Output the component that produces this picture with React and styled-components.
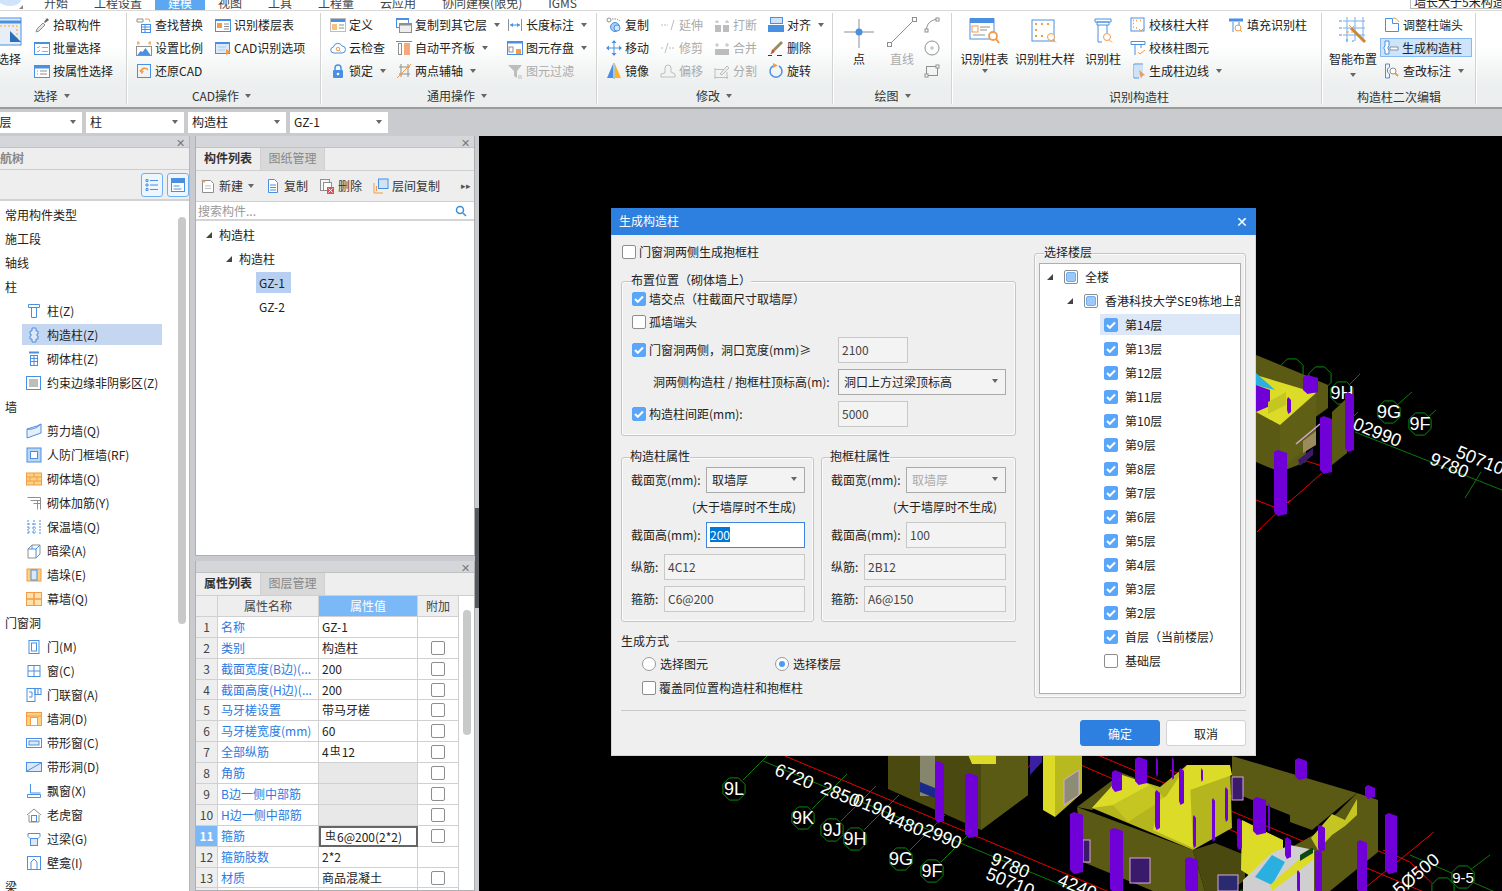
import React from 'react'
import styled, { createGlobalStyle } from 'styled-components'

const GlobalStyle = createGlobalStyle`
  html, body { margin: 0; padding: 0; background: #c9cbcf; overflow: hidden; }
  body, #root { font: 12px/16px "Noto Sans CJK SC", "Microsoft YaHei", "Liberation Sans", sans-serif; color: #222; }
  * { box-sizing: border-box; }
`

const B = '#4a90e2'
const L = '#a9cdf5'
const O = '#f29b4b'
const G = '#8f8f8f'
const D = '#bdbdbd'

// ribbon + tree icons, all on a 16 unit grid
const ic = {
  pick: <><path d="M2 15l1-3 6-6 2 2-6 6z" fill="#e4e4e4" stroke={G} /><path d="M10 5l3-4 2 2-4 3z" fill="#666" /></>,
  batch: <><rect x=".5" y="2.5" width="15" height="12" fill="#fff" stroke={B} /><path d="M.5 3h15" stroke={B} strokeWidth="2" /><path d="M3 7l1 1 2-2M3 11l1 1 2-2" stroke={O} /><path d="M8 7.5h6M8 11.5h6" stroke={O} /></>,
  attr: <><rect x=".5" y="2.5" width="15" height="12" fill="#fff" stroke={B} /><rect x="0" y="2" width="16" height="3.5" fill={B} /><path d="M3 8h1M6 8h7M3 11h1M6 11h7" stroke={G} /></>,
  find: <><path d="M1 2h6v3H1z" fill="#fff" stroke={G} /><path d="M9 2h4l1 3" stroke={O} /><rect x="5.5" y="7.5" width="9" height="8" fill="#fff" stroke={B} /><path d="M6 10h8M6 12.5h8M9 8v7" stroke={B} /></>,
  scale: <><path d="M1 3h3M12 3h3M2 1v4M14 1v4" stroke={O} /><rect x=".5" y="6.5" width="15" height="9" fill="#fff" stroke={G} /><path d="M1.5 15l3-4 2 1 3-4 5 7z" fill={B} /></>,
  restore: <><rect x="1.5" y="1.5" width="13" height="13" stroke={B} /><path d="M5 9c0-4 5-5 7-2" stroke={O} strokeWidth="1.6" /><path d="M3 7l3 4 2-3z" fill={O} /></>,
  floors: <><rect x=".5" y="2.5" width="15" height="12" fill="#fff" stroke={B} /><path d="M.5 3h15" stroke={B} strokeWidth="2" /><rect x="2" y="6" width="5" height="5" fill={O} /><path d="M9 7h5M9 9.5h5M9 12h5" stroke={G} /></>,
  cad: <><rect x=".5" y="2.5" width="14" height="11" fill="#dbe9f8" stroke={B} /><path d="M.5 3h14" stroke={B} strokeWidth="2" /><path d="M3 7h8M3 10h7" stroke={L} /><path d="M11 9l5 3-5 3z" fill={O} /></>,
  define: <><rect x=".5" y="1.5" width="15" height="13" fill="#fff" stroke={D} /><rect x="1" y="2" width="14" height="3" fill={B} /><rect x="2" y="7" width="5" height="6" fill="#f6c27d" /><path d="M9 8h5M9 11h5" stroke={G} /></>,
  cloud: <><path d="M4 13a3 3 0 0 1-.5-6 4.500 4.500 0 0 1 8.500-1 3.500 3.500 0 0 1 0 7z" fill="#fff" stroke={B} /><circle cx="8" cy="9" r="1.800" stroke={O} /><path d="M9.300 10.300l1.500 1.500" stroke={O} /></>,
  lock: <><path d="M5 7V5a3 3 0 0 1 6 0v2" stroke={B} strokeWidth="1.500" /><rect x="3" y="7" width="10" height="8" rx="1" fill={B} /><circle cx="8" cy="11" r="1.300" fill="#fff" /></>,
  copyfloor: <><rect x=".5" y="1.500" width="12" height="9" fill="#fff" stroke={B} /><path d="M0 2h13" stroke={B} strokeWidth="2" /><rect x="3.500" y="6.500" width="12" height="9" fill="#eee" stroke={G} /><path d="M3 7.500h13" stroke={G} strokeWidth="2" /></>,
  level: <><path d="M0 1.500h16" stroke={B} /><rect x="2.500" y="3.500" width="3" height="11" fill="#fff" stroke={G} /><rect x="8" y="3" width="6" height="12" fill="#f5a878" /></>,
  axis: <><path d="M3 4h11M3 11h11M5 1v13M12 1v13" stroke={G} /><path d="M1 15L15 1" stroke={O} /></>,
  dim: <><path d="M1.500 2v12M14.500 2v12" stroke={G} /><path d="M3 8h10" stroke={B} /><path d="M3 8l3-2v4zM13 8l-3-2v4z" fill={B} /></>,
  save: <><rect x=".5" y="1.500" width="15" height="13" fill="#fff" stroke={B} /><path d="M0 2.500h16" stroke={B} strokeWidth="2" /><rect x="2" y="7" width="4" height="5" stroke={G} /><rect x="9" y="9" width="5" height="5" fill={O} /></>,
  filter: <><path d="M1 2h14l-5 6v7l-3-2V8z" fill={D} /><path d="M11 13h4M11 15h4" stroke={D} /></>,
  copy: <><circle cx="3" cy="3" r="2" fill="#fff" stroke={G} /><path d="M6 2h5l3 2" stroke={G} strokeDasharray="1.500 1" /><circle cx="9" cy="10" r="4.500" fill={L} stroke={B} /><circle cx="11" cy="11" r="3" fill="#d6e7fa" stroke={B} /></>,
  move: <><path d="M8 2v12M2 8h12" stroke={B} /><path d="M8 0l2.500 3h-5zM8 16l2.500-3h-5zM0 8l3-2.500v5zM16 8l-3-2.500v5z" fill={B} /></>,
  mirror: <><path d="M7 1l-6 14h6z" fill={B} /><path d="M9 1l6 14H9z" fill="#f8b622" /><path d="M8 0v16" stroke={G} /></>,
  extend: <><path d="M1 8h7" stroke={D} strokeDasharray="2 1" /><path d="M11 13l3-10" stroke={D} /></>,
  trim: <><path d="M1 8h3M9 8h6" stroke={D} strokeDasharray="2 1" /><path d="M5 13l3-10" stroke={D} /></>,
  offset: <path d="M1 14v-3l4-1V5a3 3 0 0 1 6 0v4l4 2v3z" fill="#f3f3f3" stroke={D} />,
  brk: <><path d="M1 8h6v7H1zM9 8h6v7H9z" fill={D} /><path d="M3 3v3M13 3v3M5 5h-4M11 5h4" stroke={D} /></>,
  merge: <><path d="M1 9h14v6H1z" fill={D} /><path d="M3 3v4M13 3v4M1 5h4M11 5h4" stroke={D} /></>,
  split: <><path d="M1 6.500h11M1 14.500h13M1 5v11M13 9v7" stroke={D} /><path d="M6 11l7-8 2 2-7 7z" fill="#eee" stroke={D} /></>,
  align: <><rect x="2.500" y=".5" width="12" height="6" fill="#cfe2f8" stroke={B} /><rect x="0" y="8" width="16" height="7" fill={B} /></>,
  del: <><path d="M5 9L13 1l2 2-8 8z" fill="#9c8a60" /><path d="M2 14c2-1 1-4 3-5l2 2c-1 2-3 3-5 3z" fill="#c8532a" /><path d="M0 15.500h4M9 15.500h5" stroke="#333" /></>,
  rotate: <><path d="M5 3a6 6 0 1 0 6 0" stroke={B} strokeWidth="1.500" /><path d="M5 0l5 2.500-5 2.500z" fill={O} /></>,
  arc: <><path d="M2.500 13c0-6 4-10 11-11" stroke={G} /><rect x="1" y="12" width="3" height="3" fill="#fff" stroke={G} /><rect x="12" y="1" width="3" height="3" fill="#fff" stroke={G} /></>,
  circle: <><circle cx="8" cy="8" r="7" stroke={G} /><rect x="7" y="7" width="2" height="2" stroke={G} strokeWidth=".6" /></>,
  rect: <><rect x="2.500" y="3.500" width="11" height="9" stroke={G} /><rect x="1" y="11" width="3" height="3" fill="#fff" stroke={G} /><rect x="12" y="2" width="3" height="3" fill="#fff" stroke={G} /></>,
  checkDetail: <><rect x="1" y="1" width="13" height="13" stroke={B} /><path d="M3 3.500h1M6 3.500h1M10 3.500h1M3 6.500h1M3 10h1M6 11h1" stroke={O} strokeWidth="1.500" /><path d="M9 12l2 2 4-4" stroke={O} /></>,
  checkCol: <><path d="M1 1.500h14v3H1zM4 4.500h8" stroke={B} /><path d="M5 4.500V15M11 4.500V8" stroke={B} /><path d="M8 12l2 2 5-4" stroke={O} /></>,
  edge: <><path d="M4 1v14M4 1h9M4 15h5" stroke={B} /><rect x="4" y="2" width="9" height="12" fill="#cfe2f8" /><path d="M9 7l6 5-3 1-1 3z" fill={O} /></>,
  fill: <><path d="M1 1.500h14v3H1z" fill={B} /><path d="M5 5v10M11 5v3" stroke={B} /><circle cx="10" cy="11" r="3" fill="#fff" stroke={O} /><path d="M12 13l2 2" stroke={O} /></>,
  headAdj: <><path d="M1.500 1.500h7v5h6v8h-13z" stroke={B} fill="#fff" /><path d="M9 1c3 0 5 2 6 4" stroke={O} /></>,
  genCol: <><path d="M2 1h4v5l-1 1v2l1 1v4H2v-4l-1-1V7l1-1z" fill="#fff" stroke={B} /><path d="M7 7h8v3H7z" fill="#fff" stroke={G} /></>,
  mark: <><path d="M1.500 1v14M1.500 1h4v3l-2 2v3l2 2v4h-4" stroke={B} /><circle cx="9" cy="8" r="3" fill="#fff" stroke={G} /><path d="M11 10l3 3" stroke={O} strokeWidth="2" /></>,
  // tree icons
  col: <><path d="M2.500 1.500h11v3h-11zM5 4.500h6" stroke={B} /><path d="M5.500 4.500v10h5v-10" stroke={B} /></>,
  gz: <path d="M6 1h4v3h2v3h-1v2h1v3h-2v3H6v-3H4V9h1V7H4V4h2z" fill="#dce8f8" stroke={B} />,
  brick: <><path d="M3 1.500h10" stroke={B} strokeWidth="2" /><rect x="4.500" y="4.500" width="7" height="10" stroke={B} /><path d="M5 7.500h6M5 10.500h6M8 5v9" stroke={B} /></>,
  shade: <><rect x=".5" y="1.500" width="14" height="13" fill="#fff" stroke={B} /><rect x="3" y="4" width="9" height="8" fill="#bdbdbd" /></>,
  shear: <><path d="M1 6l10-3 4-2v9l-14 5z" fill="#e6eff9" stroke={B} /><path d="M1 6c5 1 10-1 14-5" stroke={B} /></>,
  frame: <><rect x="1" y="1" width="14" height="14" fill="#bcd6f3" stroke={B} /><rect x="4.500" y="4.500" width="7" height="7" fill="#fff" stroke={B} /></>,
  wallB: <><rect x=".5" y="2" width="15" height="12" fill="#fbd27e" stroke={O} /><path d="M1 6h14M1 10h14M8 2v4M4 6v4M11 6v4M8 10v4" stroke={O} /></>,
  rebar: <path d="M1.500 2.500h13M4.500 5.500h10M7.500 8.500h7M14.500 2.500v12M11.500 5.500v9" stroke={G} />,
  insul: <path d="M2 1v14M8 1v14M14 1v14M2 5h2M2 9h2M2 13h2M6 5h4M6 9h4M6 13h4" stroke={B} strokeDasharray="2 1" />,
  beam: <><path d="M2 6l4-4h8v9l-4 4H2z" fill="#fff" stroke={G} /><path d="M2 6h8v9M10 6l4-4M6 2v4" stroke={B} /></>,
  pier: <><rect x="1" y="2" width="14" height="12" fill="#fbd27e" stroke={O} /><rect x="5" y="3" width="6" height="10" fill="#dce8f8" stroke={B} /></>,
  curtain: <><rect x=".5" y="1.500" width="15" height="13" fill="#fde3aa" stroke={O} /><path d="M1 8h14M8 2v12" stroke={O} strokeWidth="1.500" /></>,
  door: <><rect x="3" y="1.500" width="10" height="13" fill="#fff" stroke={B} /><rect x="5.500" y="4" width="5" height="8" stroke={B} /></>,
  win: <><rect x="2" y="2.500" width="12" height="11" fill="#fff" stroke={B} /><path d="M8 3v10M2 8h12" stroke={B} /></>,
  doorwin: <><rect x="1" y="1.500" width="8" height="13" fill="#fff" stroke={B} /><rect x="9" y="1.500" width="6" height="6" stroke={B} /><path d="M12 2v5M3 5h3v5H3" stroke={B} /></>,
  hole: <><rect x=".5" y="1.500" width="15" height="13" fill="#fbd27e" stroke={O} /><path d="M1 5h14" stroke={O} /><rect x="4.500" y="6.500" width="7" height="8" fill="#fff" stroke={O} /></>,
  band: <><rect x=".5" y="3.500" width="15" height="9" fill="#fff" stroke={B} /><rect x="3" y="6" width="10" height="4" fill="#dce8f8" stroke={B} /></>,
  bandh: <><rect x=".5" y="3.500" width="15" height="9" fill="#dce8f8" stroke={B} /><path d="M1 12L15 4" stroke={B} /></>,
  bay: <path d="M4.500 1v9h10M1.500 14.500h13v-3h-13z" stroke={B} />,
  dormer: <><path d="M1 8l7-6 7 6" stroke={G} /><path d="M3 8v7h10V8" stroke={G} /><rect x="5.500" y="8.500" width="5" height="6" stroke={B} /></>,
  lintel: <><path d="M2 2.500h12v3l-2 2H4l-2-2z" fill="#fff" stroke={B} /><rect x="4.500" y="7.500" width="7" height="7" fill="#dce8f8" stroke={B} /></>,
  niche: <><rect x="1.500" y="1.500" width="13" height="13" fill="#fff" stroke={B} /><path d="M5 14V7l3-3 3 3v7" stroke={B} /></>,
  tableS: <><rect x="1" y="3" width="24" height="20" fill="#fff" stroke={B} /><rect x="1" y="2" width="24" height="5" fill={B} /><rect x="3" y="10" width="6" height="6" fill="#fff" stroke={O} /><path d="M11 11h10M11 14h7M4 19h12" stroke={G} /><circle cx="24" cy="20" r="4" fill="#fff" stroke={O} strokeWidth="1.800" /><path d="M27 23l3 4" stroke={O} strokeWidth="2" /></>,
  detailS: <><rect x="3" y="4" width="22" height="21" fill="#fff" stroke={B} /><path d="M6 8h2M12 8h2M18 8h2M6 14h2M6 20h2M12 20h2" stroke={O} strokeWidth="2" /><circle cx="22" cy="21" r="3.500" fill="#fff" stroke={O} /><path d="M24.500 24l2.500 2.500" stroke={O} /></>,
  colS: <><path d="M8 3h16v3H8zM10 6h12v3H10z" fill="#fff" stroke={B} /><path d="M11 9v17h4M20 9v8" stroke={B} /><circle cx="20" cy="21" r="3.500" fill="#fff" stroke={O} /><path d="M22.500 24l2.500 2.500" stroke={O} /></>,
  smart: <><path d="M6 5h22M6 12h22M6 19h22M10 1v24M18 1v24M26 1v24" stroke="#7ab0ea" /><path d="M2 5h3M2 12h3M2 19h3" stroke={B} /><path d="M14 12l14 14" stroke="#c8873a" strokeWidth="3" /><path d="M12 9l2 2M17 10l-2 2M9 16h3M15 17v-2" stroke={O} /><path d="M10 26v-3M16 26v-2" stroke={B} /></>,
  pointL: <><path d="M16 3v29M1 16h30" stroke={G} /><circle cx="16" cy="16" r="3.500" fill={B} /></>,
  lineL: <><path d="M4 28L28 4" stroke={G} /><rect x="1.500" y="26.500" width="4" height="4" fill="#fff" stroke={G} /><rect x="26.500" y="1.500" width="4" height="4" fill="#fff" stroke={G} /></>,
}

const Glyph = styled.svg`
  display: block;
  flex-shrink: 0;
`

const Icon = ({ n, s = 16, v = 16 }) => (
  <Glyph width={s} height={s} viewBox={`0 0 ${v} ${v}`} fill="none">{ic[n]}</Glyph>
)

const Page = styled.div`
  width: 1502px;
  height: 891px;
  overflow: hidden;
  display: flex;
  flex-direction: column;
`

const TabBar = styled.div`
  height: 11px;
  flex-shrink: 0;
  background: #fff;
  border-bottom: 1px solid #d9d9d9;
  display: flex;
  overflow: hidden;
`

const Logo = styled.div`
  width: 31px;
  flex-shrink: 0;
`

const Tab = styled.div`
  height: 10px;
  padding: 0 13px;
  line-height: 6px;
  white-space: nowrap;
  color: ${p => (p.$on ? '#fff' : '#444')};
  background: ${p => (p.$on ? '#5ba7f1' : 'transparent')};
`

const TopSearch = styled.div`
  margin-left: auto;
  width: 92px;
  height: 9px;
  line-height: 4px;
  padding-left: 3px;
  border: 1px solid #bbb;
  border-top: 0;
  background: #fdfdfd;
  white-space: nowrap;
  overflow: hidden;
`

const Ribbon = styled.div`
  height: 98px;
  flex-shrink: 0;
  display: flex;
  background: linear-gradient(#fff 35%, #edf0f0 75%, #eceeee);
  border-bottom: 2px solid #9a9c9e;
`

const Group = styled.div`
  width: ${p => p.$w}px;
  margin-left: ${p => p.$ml || 0}px;
  flex-shrink: 0;
  display: flex;
  flex-direction: column;
`

const GroupBody = styled.div`
  height: 75px;
  padding: 2px 0 0 ${p => p.$pl || 0}px;
  display: flex;
`

const GroupLabel = styled.div`
  height: 20px;
  display: flex;
  align-items: center;
  justify-content: center;
  padding-right: ${p => p.$pr || 0}px;
  padding-left: ${p => p.$pl || 0}px;
  padding-top: ${p => p.$pt || 0}px;
  color: #333;
`

const Sep = styled.div`
  width: 2px;
  flex-shrink: 0;
  margin: 2px 0 3px;
  background: linear-gradient(90deg, #d2d4d4 50%, #fff 50%);
`

const Col = styled.div`
  width: ${p => p.$w}px;
  margin-left: ${p => p.$ml || 0}px;
  flex-shrink: 0;
`

const Item = styled.div`
  height: ${p => (p.$on ? '19px' : '23px')};
  margin: ${p => (p.$on ? '2px 0 2px -4px' : '0')};
  padding-left: ${p => (p.$on ? '3px' : '0')};
  display: flex;
  align-items: center;
  gap: 3px;
  white-space: nowrap;
  color: ${p => (p.$off ? '#ababab' : '#222')};
  background: ${p => (p.$on ? '#cde4fa' : 'transparent')};
  box-shadow: ${p => (p.$on ? 'inset 0 0 0 1px #86b9ef' : 'none')};
`

const IconSlot = styled.span`
  width: 16px;
  display: flex;
  justify-content: center;
  flex-shrink: 0;
`

const Caret = styled.span`
  display: inline-block;
  width: 0;
  height: 0;
  margin-left: ${p => p.$ml ?? 4}px;
  margin-top: ${p => p.$mt || 0}px;
  border-top: 4px solid #666;
  border-left: 3.5px solid transparent;
  border-right: 3.5px solid transparent;
  flex-shrink: 0;
`

const Big = styled.div`
  width: ${p => p.$w}px;
  margin-left: ${p => p.$ml || 0}px;
  flex-shrink: 0;
  display: flex;
  flex-direction: column;
  align-items: center;
  white-space: nowrap;
  color: ${p => (p.$off ? '#ababab' : '#222')};
`

const BigIcon = styled.div`
  height: 38px;
  display: flex;
  align-items: center;
  justify-content: center;
`

const BigLabel = styled.div`
  height: 16px;
  margin-bottom: 2px;
`

const SelectTop = styled.div`
  width: 36px;
  height: 38px;
  background: #fff;
  border-radius: 0 3px 3px 0;
  display: flex;
  justify-content: flex-end;
  align-items: center;
  padding-right: 4px;
`

const ComboBar = styled.div`
  height: 27px;
  flex-shrink: 0;
  padding-top: 3px;
  display: flex;
  gap: 4px;
`

const Combo = styled.div`
  width: ${p => p.$w}px;
  margin-left: ${p => p.$ml || 0}px;
  height: 21px;
  background: #fff;
  display: flex;
  align-items: center;
  justify-content: space-between;
  padding: 0 6px 1px 4px;
  white-space: nowrap;
`

const Main = styled.div`
  flex: 1;
  min-height: 0;
  display: flex;
`

const NavPanel = styled.div`
  width: 190px;
  flex-shrink: 0;
  display: flex;
  flex-direction: column;
  background: #fff;
  border-right: 1px solid #b5b7b9;
`

const PaneHead = styled.div`
  height: 12px;
  flex-shrink: 0;
  background: #d4d6da;
  border-bottom: 1px solid #bfc1c3;
  display: flex;
  justify-content: flex-end;
  align-items: center;
  padding-right: 4px;
  color: #777;
  font-size: 11px;
  line-height: 10px;
`

const NavTitle = styled.div`
  height: 22px;
  flex-shrink: 0;
  background: #eee;
  border-bottom: 1px solid #cdcdcd;
  color: #888;
  font-weight: 700;
  line-height: 19px;
  padding-left: 0;
  overflow: hidden;
  white-space: nowrap;
  text-indent: -12px;
`

const NavTools = styled.div`
  height: 31px;
  flex-shrink: 0;
  background: #eee;
  border-bottom: 2px solid #d2d2d2;
  display: flex;
  justify-content: flex-end;
  align-items: center;
  gap: 4px;
`

const NavToolBtn = styled.div`
  width: 22px;
  height: 24px;
  border: 1px solid #6db0f2;
  border-radius: 3px;
  background: #edf5fd;
  display: flex;
  align-items: center;
  justify-content: center;
`

const NavBody = styled.div`
  flex: 1;
  min-height: 0;
  display: flex;
  overflow: hidden;
  position: relative;
`

const NavList = styled.div`
  flex: 1;
  padding-top: 3px;
`

const NavRow = styled.div`
  height: 21px;
  margin: ${p => (p.$leaf ? '0 0 3px 22px' : '0 0 3px')};
  width: ${p => (p.$leaf ? '140px' : 'auto')};
  padding-left: ${p => (p.$leaf ? '4px' : '5px')};
  display: flex;
  align-items: center;
  gap: 5px;
  white-space: nowrap;
  background: ${p => (p.$on ? '#c5d7f0' : 'transparent')};
`

const NavScroll = styled.div`
  width: 8px;
  height: 407px;
  margin: 16px 3px 0 0;
  border-radius: 4px;
  background: #c9c9c9;
  flex-shrink: 0;
`

const Gutter = styled.div`
  width: 5px;
  flex-shrink: 0;
`

const Middle = styled.div`
  width: 280px;
  flex-shrink: 0;
  display: flex;
  flex-direction: column;
`

const Pane = styled.div`
  height: ${p => p.$h}px;
  flex-shrink: 0;
  margin-top: ${p => p.$mt || 0}px;
  display: flex;
  flex-direction: column;
  border: 1px solid #adafb1;
  border-top: 0;
  background: #fff;
  overflow: hidden;
`

const TabRow = styled.div`
  height: 23px;
  flex-shrink: 0;
  background: #eee;
  border-bottom: 1px solid #cfcfcf;
  display: flex;
`

const PaneTab = styled.div`
  width: ${p => (p.$on ? '65px' : '64px')};
  text-align: center;
  line-height: 20px;
  font-weight: ${p => (p.$on ? 700 : 400)};
  color: ${p => (p.$on ? '#333' : '#888')};
  background: ${p => (p.$on ? '#eee' : '#d9d9d9')};
  border-right: 1px solid #d0d0d0;
`

const CompTools = styled.div`
  height: 31px;
  flex-shrink: 0;
  background: #eee;
  border-bottom: 1px solid #cfcfcf;
  display: flex;
  align-items: center;
  padding-left: 4px;
  color: #333;
`

const CompTool = styled.div`
  width: ${p => p.$w}px;
  display: flex;
  align-items: center;
  gap: 3px;
  white-space: nowrap;
`

const More = styled.div`
  margin-left: auto;
  padding-right: 3px;
  font-size: 9px;
  color: #555;
`

const SearchRow = styled.div`
  height: 19px;
  flex-shrink: 0;
  border-bottom: 2px solid #d4d4d4;
  display: flex;
  align-items: center;
  justify-content: space-between;
  padding: 0 7px 0 2px;
  color: #999;
`

const CompTree = styled.div`
  flex: 1;
  padding-top: 3px;
`

const CompRow = styled.div`
  height: 21px;
  margin: 0 0 3px ${p => p.$ml || 0}px;
  width: ${p => (p.$pick ? '35px' : 'auto')};
  display: flex;
  align-items: center;
  gap: 7px;
  padding-left: ${p => (p.$pick ? '3px' : '0')};
  background: ${p => (p.$on ? '#b7cff0' : 'transparent')};
`

const Tri = styled.span`
  width: 0;
  height: 0;
  flex-shrink: 0;
  margin-right: ${p => p.$mr || 0}px;
  border-bottom: 6px solid #444;
  border-left: 6px solid transparent;
`

const PropBody = styled.div`
  flex: 1;
  display: flex;
  overflow: hidden;
`

const PropTable = styled.div`
  width: 263px;
  flex-shrink: 0;
`

const PropRow = styled.div`
  height: 20.9px;
  display: grid;
  grid-template-columns: 22px 101px 99px 41px;
`

const Cell = styled.div`
  border-right: 1px solid #d0d0d0;
  border-bottom: 1px solid #d0d0d0;
  line-height: 20px;
  padding-left: 3px;
  white-space: nowrap;
  overflow: hidden;
  color: ${p => (p.$name ? '#2a7ae2' : '#222')};
  background: ${p => (p.$blank ? '#e8e8e8' : '#fff')};
`

const NumCell = styled(Cell)`
  padding: 0;
  text-align: center;
  color: ${p => (p.$on ? '#fff' : '#444')};
  font-weight: ${p => (p.$on ? 700 : 400)};
  background: ${p => (p.$on ? '#7ab8f8' : '#eee')};
`

const HeadCell = styled(Cell)`
  padding: 0;
  text-align: center;
  line-height: 19px;
  color: ${p => (p.$on ? '#fff' : '#444')};
  background: ${p => (p.$on ? '#7ab8f8' : '#eee')};
`

const EditCell = styled(Cell)`
  border: 2px solid #666;
  line-height: 17px;
  padding-left: 3px;
`

const CheckCell = styled(Cell)`
  padding: 0;
  display: flex;
  align-items: center;
  justify-content: center;
`

const Rebar = styled.span`
  font-size: 11px;
  position: relative;
  top: -2px;
  margin: 0 1px;
`

const TableScroll = styled.div`
  flex: 1;
  background: #fff;
  padding: 14px 3px 0 4px;
`

const ScrollThumb = styled.div`
  width: 8px;
  height: 125px;
  border-radius: 4px;
  background: #c9c9c9;
`

const Splitter = styled.div`
  width: 4px;
  flex-shrink: 0;
  padding-top: 372px;
`

const SplitGrip = styled.div`
  height: 100px;
  background: #55585c;
`

const Canvas = styled.div`
  flex: 1;
  position: relative;
  background: #000;
  overflow: hidden;
`

const Scene = styled.svg`
  display: block;
  width: 100%;
  height: 100%;
  font-family: "Liberation Sans", sans-serif;
`

const Dialog = styled.div`
  position: absolute;
  left: 132px;
  top: 72px;
  width: 645px;
  height: 548px;
  background: #efefef;
  border: 1px solid #d6d6d6;
  border-top: 0;
  display: flex;
  flex-direction: column;
`

const DialogTitle = styled.div`
  height: 27px;
  flex-shrink: 0;
  margin: 0 -1px;
  background: #2d7fe0;
  color: #fff;
  padding: 0 8px 2px;
  display: flex;
  align-items: center;
  justify-content: space-between;
`

const CloseX = styled.span`
  font-size: 14px;
  line-height: 16px;
`

const Columns = styled.div`
  height: 475px;
  flex-shrink: 0;
  padding: 8px 0 0 9px;
  display: flex;
  gap: 18px;
`

const LeftCol = styled.div`
  width: 395px;
  flex-shrink: 0;
`

const Line = styled.div`
  display: flex;
  align-items: center;
  height: ${p => p.$h || 18}px;
  margin-top: ${p => p.$mt || 0}px;
  padding-left: ${p => p.$pl || 0}px;
  gap: ${p => p.$gap ?? 3}px;
  white-space: nowrap;
`

const Box = styled.div`
  width: ${p => p.$w || 'auto'}${p => (p.$w ? 'px' : '')};
  height: ${p => p.$h}px;
  margin-top: ${p => p.$mt || 0}px;
  border: 1px solid #c6c6c6;
  border-radius: 3px;
  box-shadow: inset 0 0 0 1px #fbfbfb;
  padding: 0 ${p => p.$px ?? 10}px;
`

const Legend = styled.div`
  width: fit-content;
  height: 16px;
  margin: -10px 0 0 ${p => p.$ml ?? -1}px;
  background: #efefef;
`

const Pair = styled.div`
  display: flex;
  gap: 7px;
  margin-top: 21px;
`

const FieldLabel = styled.div`
  width: ${p => p.$w}px;
  flex-shrink: 0;
`

const Field = styled.div`
  width: ${p => p.$w}px;
  height: 26px;
  flex-shrink: 0;
  border: 1px solid ${p => (p.$focus ? '#3a86e0' : '#c8c8c8')};
  background: ${p => (p.$focus ? '#fff' : '#f3f3f3')};
  padding: 0 3px;
  line-height: 23px;
  color: #444;
`

const SelectField = styled(Field)`
  border-color: #aaa;
  padding: 0 7px 2px 5px;
  display: flex;
  align-items: center;
  justify-content: space-between;
  color: ${p => (p.$off ? '#aaa' : '#222')};
`

const Sel = styled.span`
  display: inline-block;
  background: #0078d7;
  color: #fff;
  line-height: 15px;
`

const Note = styled.div`
  margin-top: 7px;
  height: 14px;
  line-height: 14px;
  padding-left: ${p => p.$pl}px;
  white-space: nowrap;
`

const Rule = styled.div`
  flex: 1;
  height: 1px;
  background: #c8c8c8;
  margin-left: 5px;
`

const Radio = styled.span`
  width: 14px;
  height: 14px;
  flex-shrink: 0;
  border-radius: 50%;
  border: 1px solid #999;
  background: #fff;
  display: flex;
  align-items: center;
  justify-content: center;
  &::after {
    content: '';
    width: 6px;
    height: 6px;
    border-radius: 50%;
    background: ${p => (p.$on ? '#4a9bf5' : 'transparent')};
  }
`

const RadioOpt = styled.div`
  width: 133px;
  display: flex;
  align-items: center;
  gap: 4px;
`

const Square = styled.span`
  width: 14px;
  height: 14px;
  flex-shrink: 0;
  border-radius: 2px;
  border: 1px solid ${p => (p.$on ? '#5aa7fa' : '#8d8d8d')};
  background: ${p => (p.$on ? '#5aa7fa' : '#fff')};
  display: flex;
  align-items: center;
  justify-content: center;
`

const PartMark = styled.span`
  width: 10px;
  height: 10px;
  border-radius: 2px;
  background: #9cc8fb;
  border: 1px solid #6fb0f5;
`

const Check = ({ on, part }) => (
  <Square $on={on}>
    {on && (
      <svg width="10" height="8" viewBox="0 0 10 8" fill="none">
        <path d="M1 4l2.800 2.800L9 1.500" stroke="#fff" strokeWidth="2" />
      </svg>
    )}
    {part && <PartMark />}
  </Square>
)

const FloorBox = styled(Box)`
  flex-shrink: 0;
  margin-top: 10px;
`

const FloorTree = styled.div`
  height: 431px;
  margin-top: 3px;
  border: 1px solid #aeaeae;
  background: #fff;
  padding-top: 2px;
  overflow: hidden;
`

const FloorRow = styled.div`
  height: 21px;
  margin: 0 0 3px ${p => p.$ml || 0}px;
  padding-left: ${p => (p.$leaf ? '4px' : '0')};
  display: flex;
  align-items: center;
  gap: 7px;
  white-space: nowrap;
  background: ${p => (p.$on ? '#dce8f8' : 'transparent')};
`

const Divider = styled.div`
  height: 1px;
  flex-shrink: 0;
  margin: 0 9px;
  background: #c8c8c8;
`

const Footer = styled.div`
  padding: 9px 9px 0 0;
  display: flex;
  justify-content: flex-end;
  gap: 6px;
`

const Btn = styled.div`
  width: 80px;
  height: 26px;
  border-radius: 3px;
  border: 1px solid ${p => (p.$primary ? '#2d7fe0' : '#d2d2d2')};
  background: ${p => (p.$primary ? '#2d7fe0' : '#fff')};
  color: ${p => (p.$primary ? '#fff' : '#222')};
  text-align: center;
  line-height: 25px;
`

const Ri = ({ n, children, caret, off, on }) => (
  <Item $off={off} $on={on}>
    <IconSlot><Icon n={n} /></IconSlot>
    {children}
    {caret && <Caret />}
  </Item>
)

const navItems = [
  ['常用构件类型'], ['施工段'], ['轴线'], ['柱'],
  ['柱(Z)', 'col'], ['构造柱(Z)', 'gz', true], ['砌体柱(Z)', 'brick'], ['约束边缘非阴影区(Z)', 'shade'],
  ['墙'],
  ['剪力墙(Q)', 'shear'], ['人防门框墙(RF)', 'frame'], ['砌体墙(Q)', 'wallB'], ['砌体加筋(Y)', 'rebar'],
  ['保温墙(Q)', 'insul'], ['暗梁(A)', 'beam'], ['墙垛(E)', 'pier'], ['幕墙(Q)', 'curtain'],
  ['门窗洞'],
  ['门(M)', 'door'], ['窗(C)', 'win'], ['门联窗(A)', 'doorwin'], ['墙洞(D)', 'hole'], ['带形窗(C)', 'band'],
  ['带形洞(D)', 'bandh'], ['飘窗(X)', 'bay'], ['老虎窗', 'dormer'], ['过梁(G)', 'lintel'], ['壁龛(I)', 'niche'],
  ['梁'],
]

const propRows = [
  ['名称', 'GZ-1', false],
  ['类别', '构造柱', true],
  ['截面宽度(B边)(...', '200', true],
  ['截面高度(H边)(...', '200', true],
  ['马牙槎设置', '带马牙槎', true],
  ['马牙槎宽度(mm)', '60', true],
  ['全部纵筋', <>4<Rebar>虫</Rebar>12</>, true],
  ['角筋', null, true],
  ['B边一侧中部筋', null, true],
  ['H边一侧中部筋', null, true],
  ['箍筋', <><Rebar>虫</Rebar>6@200(2*2)</>, true, 'edit'],
  ['箍筋肢数', '2*2', false],
  ['材质', '商品混凝土', true],
  ['', '', false],
]

const floors = ['第14层', '第13层', '第12层', '第11层', '第10层', '第9层', '第8层', '第7层', '第6层', '第5层', '第4层', '第3层', '第2层', '首层（当前楼层）']

// x1, y1, x2, y2 of the purple columns in page coordinates
const pillars = [
  [1303, 375, 1318, 392], [1345, 392, 1354, 450], [1320, 416, 1332, 472], [1274, 450, 1287, 514], [1287, 397, 1291, 412],
  [935, 761, 944, 821], [965, 773, 978, 836],
  [1112, 770, 1122, 790], [1135, 757, 1147, 783], [1155, 790, 1160, 828], [1179, 768, 1184, 803],
  [1212, 798, 1215, 840], [1193, 815, 1196, 846], [1225, 787, 1228, 820], [1172, 757, 1174, 778], [1156, 757, 1158, 775], [1201, 768, 1203, 780],
  [1295, 758, 1307, 778], [1365, 785, 1375, 797], [1253, 797, 1266, 833], [1268, 803, 1270, 830],
  [1237, 818, 1242, 848], [1285, 837, 1291, 857], [1318, 825, 1325, 850], [1315, 850, 1322, 891],
  [1297, 870, 1300, 891], [1385, 813, 1397, 872], [1357, 840, 1367, 891],
  [1070, 812, 1083, 872], [1110, 828, 1123, 891], [1185, 857, 1198, 891],
]

// axis bubbles partly hidden by the model go behind it
const backHexes = [['9H', 1342, 393], ['', 1292, 370], ['', 1320, 378]]
const hexes = [
  ['9L', 734, 789], ['9K', 803, 818], ['9J', 832, 830], ['9H', 855, 839], ['9G', 901, 859], ['9F', 932, 871],
  ['9G', 1389, 412], ['9F', 1420, 424], ['9-5', 1463, 877], ['', 1443, 889],
]

const dims = [
  ['6720', 792, 782], ['2850', 838, 800], ['0190', 870, 812], ['4480', 902, 829], ['2990', 940, 842],
  ['9780', 1008, 871], ['50710', 1008, 888], ['4240', 1075, 892],
  ['02990', 1375, 438], ['9780', 1447, 471], ['50710', 1478, 466],
]

const hexPoints = (x, y, r) => [0, 1, 2, 3, 4, 5, 6, 7].map(i => {
  const a = (i * Math.PI) / 4 + Math.PI / 8
  return `${x + r * Math.cos(a)},${y + r * Math.sin(a)}`
}).join(' ')

const HexGroup = ({ list }) => (
  <>
    <g fill="#000" stroke="#0a8a0a">
      {list.map(([, x, y], i) => <polygon key={i} points={hexPoints(x, y, 12)} />)}
    </g>
    <g fill="#fff" textAnchor="middle">
      {list.map(([t, x, y], i) => (
        <text key={i} x={x} y={y + 6} fontSize={t.length > 2 ? 15 : 18}>{t}</text>
      ))}
    </g>
  </>
)

const Drawing = () => (
  <Scene viewBox="479 136 1023 755">
    <g stroke="#e80000" strokeWidth="1">
      <path d="M785 756L1200 930M1100 756L1500 924M1240 793L1400 860M1060 756L1300 860M1170 770L1240 800" />
      <path d="M1257 532L1290 500M1256 500L1287 512M1288 503L1322 473M1297 458L1322 466" />
      <path d="M1434 832L1350 900M1383 850L1410 862L1440 891M1040 756L1020 775M1180 775L1160 795M968 756L935 790M1010 756L980 790" />
    </g>
    <g stroke="#0a7a0a" strokeWidth="1">
      <path d="M763 761L1100 901M1355 432L1502 490M1410 855L1502 895M1240 891L1263 880" />
      {hexes.slice(0, 6).map(([, x, y], i) => <path key={i} d={`M${x + 9} ${y - 9}L${x + 44} ${y - 44}`} />)}
      <path d="M1396 406L1412 392M1427 418L1436 410M1348 386L1360 374M1358 412L1345 425M1470 870L1490 855" />
      <path d="M1481 472L1465 498" />
    </g>
    <HexGroup list={backHexes} />

    <g>
      <polygon points="888,745 1028,745 1028,795 981,830 888,789" fill="#4a4a10" />
      <polygon points="981,830 1028,795 1028,745 981,745" fill="#5a5a14" />
      <polygon points="964,745 996,745 996,764 972,764" fill="#dcdc28" />
      <rect x="920" y="745" width="15" height="51" fill="#86866c" />
      <polygon points="920,782 935,788 935,798 920,792" fill="#1a2a8c" />
      <polygon points="1043,745 1055,745 1055,817 1043,810" fill="#dcdc28" />
      <polygon points="1055,745 1082,745 1082,793 1055,817" fill="#b8b81f" />
      <polygon points="1064,780 1079,770 1079,795 1064,805" fill="#8d8d75" stroke="#d8a8d8" />
      <polygon points="1030,745 1042,745 1042,762 1030,775" fill="#3a20a0" />
    </g>

    <g>
      <polygon points="1232,756 1357,793 1312,830 1290,822 1290,815 1232,792" fill="#5a5a14" />
      <polygon points="1357,793 1378,800 1378,852 1330,891 1250,891 1250,870 1317,833" fill="#5a5a14" />
      <polygon points="1311,838 1332,814 1345,820 1357,799 1357,815 1345,826 1332,835 1318,850" fill="#c4c422" />
      <polygon points="1077,807 1193,850 1205,891 1153,891 1083,862" fill="#5a5a14" />
      <polygon points="1077,807 1122,773 1135,778 1092,810" fill="#5a5a14" />
      <polygon points="1092,808 1122,775 1160,787 1187,765 1230,765 1232,828 1193,850" fill="#b5b51e" />
      <polygon points="1092,808 1122,775 1150,785 1113,805" fill="#dcdc28" />
      <polygon points="1113,805 1150,785 1165,798 1128,822" fill="#c6c622" />
      <polygon points="1187,765 1230,765 1232,775 1190,790 1165,798" fill="#dcdc28" />
      <polygon points="1160,800 1190,782 1193,848 1153,830" fill="#dcdc28" />
      <polygon points="1193,850 1215,843 1245,855 1245,880 1230,891 1205,891" fill="#4a4a10" />
      <polygon points="1242,820 1283,840 1283,862 1256,880 1241,870" fill="#dcdc28" />
      <polygon points="1243,880 1272,853 1290,845 1314,850 1314,891 1243,891" fill="#cfcfcf" />
      <polygon points="1255,877 1272,855 1285,862 1272,885" fill="#29b0e0" />
      <polygon points="1270,885 1313,847 1313,860 1272,891" fill="#dcdc28" />
      <polygon points="1300,855 1313,847 1313,853 1300,861" fill="#0c4a10" />
      <rect x="1130" y="858" width="20" height="25" fill="#3a1a6a" stroke="#d8a8d8" />
      <rect x="1232" y="777" width="11" height="23" fill="#3a1a6a" stroke="#d8a8d8" />
      <rect x="1083" y="840" width="7" height="22" fill="#3a1a6a" stroke="#d8a8d8" />
      <rect x="1218" y="875" width="20" height="16" fill="#2a2a70" stroke="#d8a8d8" />
    </g>

    <g>
      <polygon points="1256,355 1300,373 1328,385 1328,408 1306,424 1306,462 1280,472 1256,462" fill="#5a5a14" />
      <polygon points="1280,425 1316,393 1316,438 1280,472" fill="#5f5f16" />
      <polygon points="1256,375 1316,393 1280,425 1256,412" fill="#dcdc28" />
      <polygon points="1256,373 1275,390 1256,385" fill="#29b0e0" />
      <polygon points="1256,385 1270,390 1270,406 1256,412" fill="#7000d8" />
      <polygon points="1268,402 1286,392 1286,405 1268,414" fill="#c6c622" />
      <polygon points="1332,412 1347,398 1347,453 1332,465" fill="#5a5a14" />
      <polygon points="1303,441 1316,431 1316,445 1303,453" fill="#9a8a5c" />
      <path d="M1296 444L1320 424" stroke="#d8a8d8" strokeWidth="1.500" />
      <polygon points="1298,460 1313,448 1313,455 1300,466" fill="#3a1a6a" />
    </g>

    {pillars.map(([x1, y1, x2, y2], i) => {
      const w = x2 - x1
      return (
        <polygon
          key={i}
          fill="#7000d8"
          points={`${x1},${y1 + 2} ${x1 + w * 0.3},${y1} ${x2},${y1 + 3} ${x2},${y2} ${x1 + w * 0.3},${y2 + 2} ${x1},${y2 - 2}`}
        />
      )
    })}

    <HexGroup list={hexes} />
    <g fill="#fff" fontSize="18" textAnchor="middle">
      {dims.map(([t, x, y], i) => (
        <text key={i} x={x} y={y} transform={`rotate(22 ${x} ${y})`}>{t}</text>
      ))}
      <text x="1420" y="879" transform="rotate(-40 1420 879)">5Ø500</text>
    </g>
  </Scene>
)

const App = () => (
  <Page>
    <GlobalStyle />
    <TabBar>
      <Logo>
        <Glyph width="31" height="10" viewBox="0 0 31 10">
          <ellipse cx="10" cy="0" rx="11" ry="6" fill="#cfe4fa" />
          <path d="M19 9l4-4v4z" fill="#888" />
        </Glyph>
      </Logo>
      {['开始', '工程设置', '建模', '视图', '工具', '工程量', '云应用', '协同建模(限免)', 'IGMS'].map(t => (
        <Tab key={t} $on={t === '建模'}>{t}</Tab>
      ))}
      <TopSearch>墙长大于5米构造柱</TopSearch>
    </TabBar>

    <Ribbon>
      <Group $w={135} $ml={-9}>
        <GroupBody>
          <Big $w={36}>
            <SelectTop>
              <Glyph width="26" height="30" viewBox="0 0 26 30" fill="none">
                <rect x="0" y="1" width="24" height="27" fill="#e7eef8" stroke={B} />
                <path d="M0 5h24" stroke={B} strokeWidth="3" />
                <path d="M3 9h17v15" stroke="#f5a623" strokeDasharray="2 2" />
                <path d="M13 14l11 11H13z" fill="#2c6fb8" />
              </Glyph>
            </SelectTop>
            <BigLabel>选择</BigLabel>
          </Big>
          <Col $w={92} $ml={7}>
            <Ri n="pick">拾取构件</Ri>
            <Ri n="batch">批量选择</Ri>
            <Ri n="attr">按属性选择</Ri>
          </Col>
        </GroupBody>
        <GroupLabel $pr={14}>选择<Caret $ml={6} /></GroupLabel>
      </Group>
      <Sep />
      <Group $w={192}>
        <GroupBody $pl={8}>
          <Col $w={79}>
            <Ri n="find">查找替换</Ri>
            <Ri n="scale">设置比例</Ri>
            <Ri n="restore">还原CAD</Ri>
          </Col>
          <Col $w={105}>
            <Ri n="floors">识别楼层表</Ri>
            <Ri n="cad">CAD识别选项</Ri>
          </Col>
        </GroupBody>
        <GroupLabel $pr={5}>CAD操作<Caret $ml={6} /></GroupLabel>
      </Group>
      <Sep />
      <Group $w={274}>
        <GroupBody $pl={8}>
          <Col $w={66}>
            <Ri n="define">定义</Ri>
            <Ri n="cloud">云检查</Ri>
            <Ri n="lock" caret>锁定</Ri>
          </Col>
          <Col $w={111}>
            <Ri n="copyfloor" caret>复制到其它层</Ri>
            <Ri n="level" caret>自动平齐板</Ri>
            <Ri n="axis" caret>两点辅轴</Ri>
          </Col>
          <Col $w={89}>
            <Ri n="dim" caret>长度标注</Ri>
            <Ri n="save" caret>图元存盘</Ri>
            <Ri n="filter" off>图元过滤</Ri>
          </Col>
        </GroupBody>
        <GroupLabel $pr={4}>通用操作<Caret $ml={6} /></GroupLabel>
      </Group>
      <Sep />
      <Group $w={234}>
        <GroupBody $pl={8}>
          <Col $w={54}>
            <Ri n="copy">复制</Ri>
            <Ri n="move">移动</Ri>
            <Ri n="mirror">镜像</Ri>
          </Col>
          <Col $w={54}>
            <Ri n="extend" off>延伸</Ri>
            <Ri n="trim" off>修剪</Ri>
            <Ri n="offset" off>偏移</Ri>
          </Col>
          <Col $w={54}>
            <Ri n="brk" off>打断</Ri>
            <Ri n="merge" off>合并</Ri>
            <Ri n="split" off>分割</Ri>
          </Col>
          <Col $w={64}>
            <Ri n="align" caret>对齐</Ri>
            <Ri n="del">删除</Ri>
            <Ri n="rotate">旋转</Ri>
          </Col>
        </GroupBody>
        <GroupLabel $pr={2}>修改<Caret $ml={6} /></GroupLabel>
      </Group>
      <Sep />
      <Group $w={117}>
        <GroupBody $pl={4}>
          <Big $w={42}>
            <BigIcon><Icon n="pointL" s={32} v={32} /></BigIcon>
            <BigLabel>点</BigLabel>
          </Big>
          <Big $w={44} $off>
            <BigIcon><Icon n="lineL" s={32} v={32} /></BigIcon>
            <BigLabel>直线</BigLabel>
          </Big>
          <Col $w={20}>
            <Item><IconSlot><Icon n="arc" /></IconSlot></Item>
            <Item><IconSlot><Icon n="circle" /></IconSlot></Item>
            <Item><IconSlot><Icon n="rect" /></IconSlot></Item>
          </Col>
        </GroupBody>
        <GroupLabel>绘图<Caret $ml={6} /></GroupLabel>
      </Group>
      <Sep />
      <Group $w={368}>
        <GroupBody $pl={4}>
          <Big $w={55}>
            <BigIcon><Icon n="tableS" s={32} v={32} /></BigIcon>
            <BigLabel>识别柱表</BigLabel>
            <Caret $ml={0} />
          </Big>
          <Big $w={60} $ml={3}>
            <BigIcon><Icon n="detailS" s={32} v={32} /></BigIcon>
            <BigLabel>识别柱大样</BigLabel>
          </Big>
          <Big $w={46} $ml={5}>
            <BigIcon><Icon n="colS" s={32} v={32} /></BigIcon>
            <BigLabel>识别柱</BigLabel>
          </Big>
          <Col $w={98} $ml={4}>
            <Ri n="checkDetail">校核柱大样</Ri>
            <Ri n="checkCol">校核柱图元</Ri>
            <Ri n="edge" caret>生成柱边线</Ri>
          </Col>
          <Col $w={92}>
            <Ri n="fill">填充识别柱</Ri>
          </Col>
        </GroupBody>
        <GroupLabel $pl={4} $pt={2}>识别构造柱</GroupLabel>
      </Group>
      <Sep />
      <Group $w={152}>
        <GroupBody $pl={4}>
          <Big $w={52}>
            <BigIcon><Icon n="smart" s={32} v={32} /></BigIcon>
            <BigLabel>智能布置</BigLabel>
            <Caret $ml={0} $mt={4} />
          </Big>
          <Col $w={88} $ml={5}>
            <Ri n="headAdj">调整柱端头</Ri>
            <Ri n="genCol" on>生成构造柱</Ri>
            <Ri n="mark" caret>查改标注</Ri>
          </Col>
        </GroupBody>
        <GroupLabel $pt={2}>构造柱二次编辑</GroupLabel>
      </Group>
      <Sep />
    </Ribbon>

    <ComboBar>
      <Combo $w={92} $ml={-10}><span>&nbsp;&nbsp;层</span><Caret /></Combo>
      <Combo $w={98}><span>柱</span><Caret /></Combo>
      <Combo $w={98}><span>构造柱</span><Caret /></Combo>
      <Combo $w={98}><span>GZ-1</span><Caret /></Combo>
    </ComboBar>

    <Main>
      <NavPanel>
        <PaneHead>✕</PaneHead>
        <NavTitle>导航树</NavTitle>
        <NavTools>
          <NavToolBtn><Glyph width="14" height="16" viewBox="0 0 14 16" fill="none"><path d="M1 2.500h2v2H1zM1 7h2v2H1zM1 11.500h2v2H1zM5 3.500h8M5 8h8M5 12.500h8" stroke={B} /></Glyph></NavToolBtn>
          <NavToolBtn><Glyph width="16" height="16" viewBox="0 0 16 16" fill="none"><rect x="1.500" y="1.500" width="13" height="13" fill="#fff" stroke={B} /><rect x="1" y="2" width="14" height="4" fill={B} /><path d="M3.500 9h6M3.500 12h8" stroke={B} /></Glyph></NavToolBtn>
        </NavTools>
        <NavBody>
          <NavList>
            {navItems.map(([t, n, on]) => (
              <NavRow key={t} $leaf={!!n} $on={on}>
                {n && <Icon n={n} />}
                {t}
              </NavRow>
            ))}
          </NavList>
          <NavScroll />
        </NavBody>
      </NavPanel>
      <Gutter />

      <Middle>
        <Pane $h={420}>
          <PaneHead>✕</PaneHead>
          <TabRow>
            <PaneTab $on>构件列表</PaneTab>
            <PaneTab>图纸管理</PaneTab>
          </TabRow>
          <CompTools>
            <CompTool $w={65}>
              <Glyph width="16" height="16" viewBox="0 0 16 16" fill="none">
                <path d="M2.500 2.500h8l3 3v9h-11z" fill="#fff" stroke={G} />
                <path d="M2 1l1 1.500L1 3l2 .5L2 5l2-1 1 1 0-2z" fill={O} />
                <path d="M5 8h6M5 10.500h6" stroke={D} />
              </Glyph>
              新建<Caret $ml={2} />
            </CompTool>
            <CompTool $w={54}>
              <Glyph width="16" height="16" viewBox="0 0 16 16" fill="none"><path d="M3.500 1.500h6l3 3v10h-9z" fill="#fff" stroke={B} /><path d="M5 7h6M5 9.500h6M5 12h6" stroke={B} /></Glyph>
              复制
            </CompTool>
            <CompTool $w={54}>
              <Glyph width="16" height="16" viewBox="0 0 16 16" fill="none"><rect x="1.500" y="1.500" width="9" height="11" fill="#f7f7f7" stroke={G} /><rect x="4.500" y="4.500" width="8" height="8" fill="#fff" stroke={G} /><rect x="8" y="9" width="7" height="7" fill="#e05050" /><path d="M9.500 10.500l4 4M13.500 10.500l-4 4" stroke="#fff" /></Glyph>
              删除
            </CompTool>
            <CompTool $w={70}>
              <Glyph width="16" height="16" viewBox="0 0 16 16" fill="none"><path d="M1 15V5M1 15h9M3.500 13V8" stroke={O} /><rect x="5.500" y="1" width="9.500" height="9.500" fill="#cfe2f8" stroke={B} /></Glyph>
              层间复制
            </CompTool>
            <More>▸▸</More>
          </CompTools>
          <SearchRow>
            搜索构件...
            <Glyph width="12" height="12" viewBox="0 0 12 12" fill="none"><circle cx="5" cy="5" r="3.500" stroke="#3a8fd8" strokeWidth="1.500" /><path d="M8 8l3 3" stroke="#3a8fd8" strokeWidth="1.500" /></Glyph>
          </SearchRow>
          <CompTree>
            <CompRow $ml={10}><Tri />构造柱</CompRow>
            <CompRow $ml={30}><Tri />构造柱</CompRow>
            <CompRow $ml={60} $pick $on>GZ-1</CompRow>
            <CompRow $ml={60} $pick>GZ-2</CompRow>
          </CompTree>
        </Pane>
        <Pane $h={330} $mt={5}>
          <PaneHead>✕</PaneHead>
          <TabRow>
            <PaneTab $on>属性列表</PaneTab>
            <PaneTab>图层管理</PaneTab>
          </TabRow>
          <PropBody>
            <PropTable>
              <PropRow>
                <HeadCell />
                <HeadCell>属性名称</HeadCell>
                <HeadCell $on>属性值</HeadCell>
                <HeadCell>附加</HeadCell>
              </PropRow>
              {propRows.map(([name, value, box, kind], i) => {
                const Value = kind === 'edit' ? EditCell : Cell
                return (
                  <PropRow key={i}>
                    <NumCell $on={kind === 'edit'}>{name ? i + 1 : ''}</NumCell>
                    <Cell $name>{name}</Cell>
                    <Value $blank={value === null}>{value}</Value>
                    <CheckCell>{box && <Check />}</CheckCell>
                  </PropRow>
                )
              })}
            </PropTable>
            <TableScroll><ScrollThumb /></TableScroll>
          </PropBody>
        </Pane>
      </Middle>
      <Splitter><SplitGrip /></Splitter>

      <Canvas>
        <Drawing />
        <Dialog>
          <DialogTitle>生成构造柱<CloseX>✕</CloseX></DialogTitle>
          <Columns>
            <LeftCol>
              <Line $pl={1}><Check />门窗洞两侧生成抱框柱</Line>
              <Box $h={155} $mt={20}>
                <Legend>布置位置（砌体墙上）</Legend>
                <Line $mt={2}><Check on />墙交点（柱截面尺寸取墙厚）</Line>
                <Line $mt={5}><Check />孤墙端头</Line>
                <Line $h={26} $mt={6}><Check on /><FieldLabel $w={186}>门窗洞两侧，洞口宽度(mm)≥</FieldLabel><Field $w={70}>2100</Field></Line>
                <Line $h={26} $mt={6} $pl={21} $gap={0}><FieldLabel $w={185}>洞两侧构造柱 / 抱框柱顶标高(m):</FieldLabel><SelectField $w={168}>洞口上方过梁顶标高<Caret /></SelectField></Line>
                <Line $h={26} $mt={6}><Check on /><FieldLabel $w={186}>构造柱间距(mm):</FieldLabel><Field $w={70}>5000</Field></Line>
              </Box>
              <Pair>
                <Box $w={193} $h={165} $px={9}>
                  <Legend>构造柱属性</Legend>
                  <Line $h={26} $mt={3} $gap={0}><FieldLabel $w={75}>截面宽(mm):</FieldLabel><SelectField $w={99}>取墙厚<Caret /></SelectField></Line>
                  <Note $pl={61}>(大于墙厚时不生成)</Note>
                  <Line $h={26} $mt={8} $gap={0}><FieldLabel $w={75}>截面高(mm):</FieldLabel><Field $w={99} $focus><Sel>200</Sel></Field></Line>
                  <Line $h={26} $mt={6} $gap={0}><FieldLabel $w={33}>纵筋:</FieldLabel><Field $w={141}>4C12</Field></Line>
                  <Line $h={26} $mt={6} $gap={0}><FieldLabel $w={33}>箍筋:</FieldLabel><Field $w={141}>C6@200</Field></Line>
                </Box>
                <Box $w={195} $h={165} $px={9}>
                  <Legend>抱框柱属性</Legend>
                  <Line $h={26} $mt={3} $gap={0}><FieldLabel $w={75}>截面宽(mm):</FieldLabel><SelectField $w={100} $off>取墙厚<Caret /></SelectField></Line>
                  <Note $pl={62}>(大于墙厚时不生成)</Note>
                  <Line $h={26} $mt={8} $gap={0}><FieldLabel $w={75}>截面高(mm):</FieldLabel><Field $w={100}>100</Field></Line>
                  <Line $h={26} $mt={6} $gap={0}><FieldLabel $w={33}>纵筋:</FieldLabel><Field $w={142}>2B12</Field></Line>
                  <Line $h={26} $mt={6} $gap={0}><FieldLabel $w={33}>箍筋:</FieldLabel><Field $w={142}>A6@150</Field></Line>
                </Box>
              </Pair>
              <Line $mt={10}>生成方式<Rule /></Line>
              <Line $mt={5} $pl={21} $gap={0}>
                <RadioOpt><Radio />选择图元</RadioOpt>
                <RadioOpt><Radio $on />选择楼层</RadioOpt>
              </Line>
              <Line $mt={6} $pl={21}><Check />覆盖同位置构造柱和抱框柱</Line>
            </LeftCol>
            <FloorBox $w={212} $h={445} $px={4}>
              <Legend $ml={5}>选择楼层</Legend>
              <FloorTree>
                <FloorRow $ml={7}><Tri $mr={4} /><Check part />全楼</FloorRow>
                <FloorRow $ml={27}><Tri $mr={4} /><Check part />香港科技大学SE9栋地上部分</FloorRow>
                {floors.map((f, i) => (
                  <FloorRow key={f} $ml={60} $leaf $on={i === 0}><Check on />{f}</FloorRow>
                ))}
                <FloorRow $ml={60} $leaf><Check />基础层</FloorRow>
              </FloorTree>
            </FloorBox>
          </Columns>
          <Divider />
          <Footer>
            <Btn $primary>确定</Btn>
            <Btn>取消</Btn>
          </Footer>
        </Dialog>
      </Canvas>
    </Main>
  </Page>
)

export default App
